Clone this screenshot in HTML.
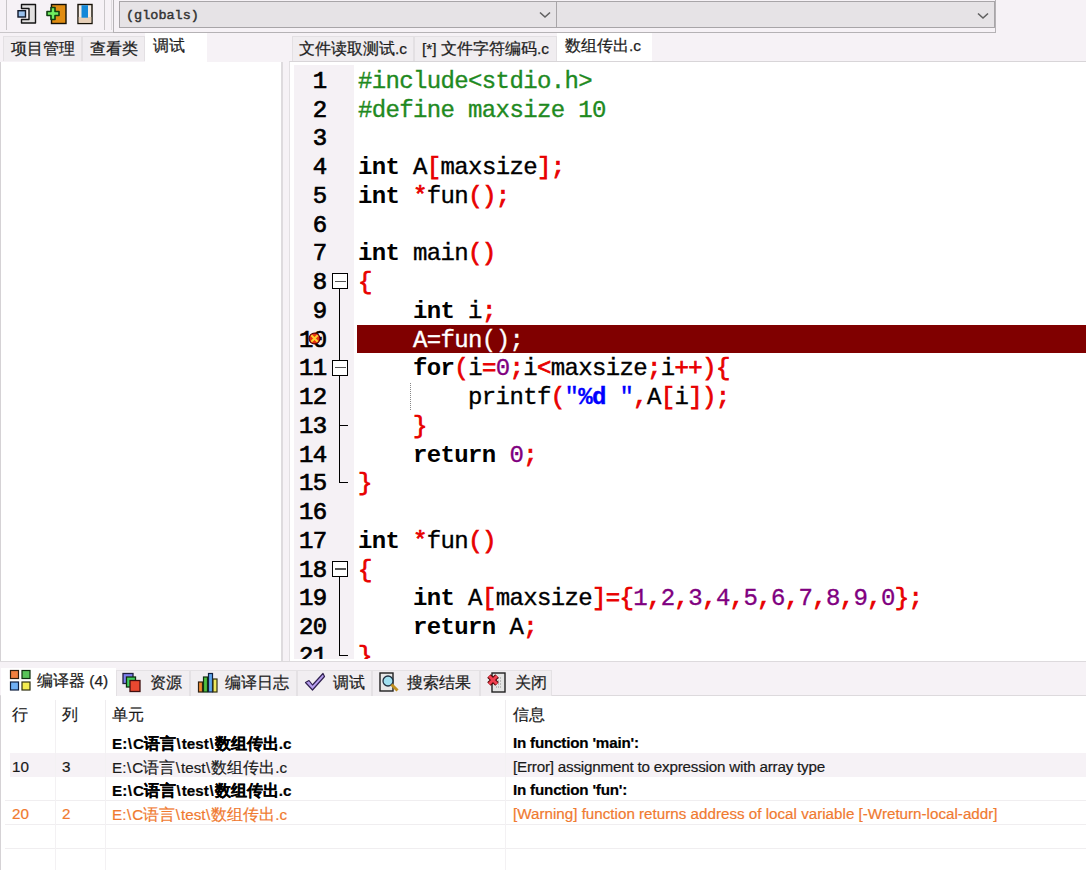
<!DOCTYPE html>
<html><head><meta charset="utf-8"><style>
*{box-sizing:border-box;margin:0;padding:0}
html,body{width:1086px;height:870px;overflow:hidden;background:#f6f2f6;font-family:"Liberation Sans",sans-serif;color:#1a1a1a}
.a{position:absolute}
.code{position:absolute;font-family:"Liberation Mono",monospace;font-size:24px;letter-spacing:-0.64px;white-space:pre;color:#000;-webkit-text-stroke:0.35px currentColor}
.k{font-weight:bold;color:#000;-webkit-text-stroke:0}
.r{color:#e80000;font-weight:normal;-webkit-text-stroke:0.75px currentColor}
.g{color:#1f8a1f}
.p{color:#800080}
.b{color:#0000ff}
.ln{position:absolute;font-family:"Liberation Mono",monospace;font-size:24px;letter-spacing:-0.64px;font-weight:normal;-webkit-text-stroke:0.7px #000;color:#000;text-align:right;width:42px;white-space:pre}
.tab{position:absolute;font-size:15.5px;white-space:nowrap;color:#1e1e1e;-webkit-text-stroke:0.25px #1e1e1e}
.cell{position:absolute;font-size:15.2px;line-height:20px;white-space:nowrap;color:#1a1a1a;-webkit-text-stroke:0.2px currentColor}
</style></head><body>
<div class="a" style="left:0;top:0;width:996px;height:33px;background:#f6f2f6;border-bottom:1px solid #c9c6c9"></div>
<div class="a" style="left:6px;top:0;width:1px;height:30px;background:#c8c5c8"></div>
<svg class="a" style="left:0;top:0" width="100" height="30" viewBox="0 0 100 30"><path d="M21.5 4.5 H35.5 V23 H21.5 V19.5 H29 V8.5 H21.5 Z" fill="#e2e0e0" stroke="#151515" stroke-width="1.4" stroke-linejoin="round"/><rect x="18" y="10.7" width="7.5" height="6.3" fill="#98c0ec" stroke="#101828" stroke-width="1.4"/><rect x="51.5" y="4.5" width="14.5" height="19" fill="#e08c12" stroke="#151005" stroke-width="1.4"/><path d="M51 7.5 h4 v4 h4 v4 h-4 v4 h-4 v-4 h-4 v-4 h4 Z" fill="#70ee60" stroke="#104010" stroke-width="1.6" stroke-linejoin="round"/><rect x="78" y="4.5" width="14" height="19" fill="#f4ece4" stroke="#151005" stroke-width="1.4"/><rect x="78.7" y="17" width="12.6" height="5.8" fill="#e8d0b8"/><rect x="81.5" y="5.2" width="6.5" height="12.5" fill="#1488d8"/></svg>
<div class="a" style="left:104px;top:0;width:1px;height:30px;background:#c8c5c8"></div>
<div class="a" style="left:111px;top:0;width:1px;height:30px;background:#dedbde"></div>
<div class="a" style="left:113px;top:-2px;width:883px;height:35px;border:1px solid #b5b2b5;background:#f6f2f6"></div>
<div class="a" style="left:119px;top:1px;width:438px;height:27px;border:1px solid #a8a5a8;background:#e6e3e6"></div>
<div class="a" style="left:556px;top:1px;width:439px;height:27px;border:1px solid #a8a5a8;background:#e6e3e6"></div>
<div class="a" style="left:126px;top:8px;font-family:'Liberation Mono',monospace;font-size:13.5px;font-weight:normal;-webkit-text-stroke:0.45px #333;color:#333;white-space:pre">(globals)</div>
<svg class="a" style="left:539px;top:10.8px" width="12" height="8"><path d="M1 1.5 L6 6 L11 1.5" fill="none" stroke="#606060" stroke-width="1.6"/></svg>
<svg class="a" style="left:976.5px;top:11.5px" width="12" height="8"><path d="M1 1.5 L6 6 L11 1.5" fill="none" stroke="#606060" stroke-width="1.6"/></svg>
<div class="tab" style="left:3px;top:36px;width:79px;height:25px;background:#f0edf0;border:1px solid #e3e0e3;border-bottom:none;padding:2px 0 0 7px">项目管理</div>
<div class="tab" style="left:82px;top:36px;width:63px;height:25px;background:#f0edf0;border:1px solid #e3e0e3;border-bottom:none;padding:2px 0 0 7px">查看类</div>
<div class="tab" style="left:145px;top:33px;width:62px;height:29px;background:#fff;padding:3px 0 0 8px">调试</div>
<div class="a" style="left:0;top:61.5px;width:281px;height:600.5px;background:#fff;border-left:1px solid #d5d2d5"></div>
<div class="a" style="left:281px;top:61.5px;width:1.5px;height:600.5px;background:#dedbde"></div>
<div class="tab" style="left:292px;top:36px;width:122px;height:25px;background:#f0edf0;border:1px solid #e3e0e3;border-bottom:none;padding:2px 0 0 6px">文件读取测试.c</div>
<div class="tab" style="left:414px;top:36px;width:143px;height:25px;background:#f0edf0;border:1px solid #e3e0e3;border-bottom:none;padding:2px 0 0 7px">[*] 文件字符编码.c</div>
<div class="tab" style="left:557px;top:33px;width:95px;height:29px;background:#fff;padding:3px 0 0 8px">数组传出.c</div>
<div class="a" style="left:289px;top:60.5px;width:797px;height:601.5px;background:#fff;border-left:1px solid #e2dfe2;border-top:1px solid #d8d5d8;border-bottom:1px solid #d5d2d5;overflow:hidden">
<div class="a" style="left:3.8000000000000114px;top:3px;width:60.6px;height:600px;background:#f5f1f5"></div>
<div class="a" style="left:66.60000000000002px;top:263.00px;width:800px;height:28.75px;background:#800000"></div>
<div class="code" style="left:68px;top:6.25px;height:28.75px;line-height:28.75px"><span class="g">#include&lt;stdio.h&gt;</span></div>
<div class="ln" style="left:-5.5px;top:6.45px;height:28.75px;line-height:28.75px">1</div>
<div class="code" style="left:68px;top:35.00px;height:28.75px;line-height:28.75px"><span class="g">#define maxsize 10</span></div>
<div class="ln" style="left:-5.5px;top:35.20px;height:28.75px;line-height:28.75px">2</div>
<div class="code" style="left:68px;top:63.75px;height:28.75px;line-height:28.75px"></div>
<div class="ln" style="left:-5.5px;top:63.95px;height:28.75px;line-height:28.75px">3</div>
<div class="code" style="left:68px;top:92.50px;height:28.75px;line-height:28.75px"><span class="k">int</span> A<span class="r">[</span>maxsize<span class="r">];</span></div>
<div class="ln" style="left:-5.5px;top:92.70px;height:28.75px;line-height:28.75px">4</div>
<div class="code" style="left:68px;top:121.25px;height:28.75px;line-height:28.75px"><span class="k">int</span> <span class="r">*</span>fun<span class="r">();</span></div>
<div class="ln" style="left:-5.5px;top:121.45px;height:28.75px;line-height:28.75px">5</div>
<div class="code" style="left:68px;top:150.00px;height:28.75px;line-height:28.75px"></div>
<div class="ln" style="left:-5.5px;top:150.20px;height:28.75px;line-height:28.75px">6</div>
<div class="code" style="left:68px;top:178.75px;height:28.75px;line-height:28.75px"><span class="k">int</span> main<span class="r">()</span></div>
<div class="ln" style="left:-5.5px;top:178.95px;height:28.75px;line-height:28.75px">7</div>
<div class="code" style="left:68px;top:207.50px;height:28.75px;line-height:28.75px"><span class="r">{</span></div>
<div class="ln" style="left:-5.5px;top:207.70px;height:28.75px;line-height:28.75px">8</div>
<div class="code" style="left:68px;top:236.25px;height:28.75px;line-height:28.75px">    <span class="k">int</span> i<span class="r">;</span></div>
<div class="ln" style="left:-5.5px;top:236.45px;height:28.75px;line-height:28.75px">9</div>
<div class="code" style="left:68px;top:265.00px;height:28.75px;line-height:28.75px">    <span style="color:#fff">A=fun();</span></div>
<div class="ln" style="left:-5.5px;top:265.20px;height:28.75px;line-height:28.75px">10</div>
<div class="code" style="left:68px;top:293.75px;height:28.75px;line-height:28.75px">    <span class="k">for</span><span class="r">(</span>i<span class="r">=</span><span class="p">0</span><span class="r">;</span>i<span class="r">&lt;</span>maxsize<span class="r">;</span>i<span class="r">++){</span></div>
<div class="ln" style="left:-5.5px;top:293.95px;height:28.75px;line-height:28.75px">11</div>
<div class="code" style="left:68px;top:322.50px;height:28.75px;line-height:28.75px">        printf<span class="r">(</span><span class="b">"<b>%d</b> "</span><span class="r">,</span>A<span class="r">[</span>i<span class="r">]);</span></div>
<div class="ln" style="left:-5.5px;top:322.70px;height:28.75px;line-height:28.75px">12</div>
<div class="code" style="left:68px;top:351.25px;height:28.75px;line-height:28.75px">    <span class="r">}</span></div>
<div class="ln" style="left:-5.5px;top:351.45px;height:28.75px;line-height:28.75px">13</div>
<div class="code" style="left:68px;top:380.00px;height:28.75px;line-height:28.75px">    <span class="k">return</span> <span class="p">0</span><span class="r">;</span></div>
<div class="ln" style="left:-5.5px;top:380.20px;height:28.75px;line-height:28.75px">14</div>
<div class="code" style="left:68px;top:408.75px;height:28.75px;line-height:28.75px"><span class="r">}</span></div>
<div class="ln" style="left:-5.5px;top:408.95px;height:28.75px;line-height:28.75px">15</div>
<div class="code" style="left:68px;top:437.50px;height:28.75px;line-height:28.75px"></div>
<div class="ln" style="left:-5.5px;top:437.70px;height:28.75px;line-height:28.75px">16</div>
<div class="code" style="left:68px;top:466.25px;height:28.75px;line-height:28.75px"><span class="k">int</span> <span class="r">*</span>fun<span class="r">()</span></div>
<div class="ln" style="left:-5.5px;top:466.45px;height:28.75px;line-height:28.75px">17</div>
<div class="code" style="left:68px;top:495.00px;height:28.75px;line-height:28.75px"><span class="r">{</span></div>
<div class="ln" style="left:-5.5px;top:495.20px;height:28.75px;line-height:28.75px">18</div>
<div class="code" style="left:68px;top:523.75px;height:28.75px;line-height:28.75px">    <span class="k">int</span> A<span class="r">[</span>maxsize<span class="r">]={</span><span class="p">1</span><span class="r">,</span><span class="p">2</span><span class="r">,</span><span class="p">3</span><span class="r">,</span><span class="p">4</span><span class="r">,</span><span class="p">5</span><span class="r">,</span><span class="p">6</span><span class="r">,</span><span class="p">7</span><span class="r">,</span><span class="p">8</span><span class="r">,</span><span class="p">9</span><span class="r">,</span><span class="p">0</span><span class="r">};</span></div>
<div class="ln" style="left:-5.5px;top:523.95px;height:28.75px;line-height:28.75px">19</div>
<div class="code" style="left:68px;top:552.50px;height:28.75px;line-height:28.75px">    <span class="k">return</span> A<span class="r">;</span></div>
<div class="ln" style="left:-5.5px;top:552.70px;height:28.75px;line-height:28.75px">20</div>
<div class="code" style="left:68px;top:581.25px;height:28.75px;line-height:28.75px"><span class="r">}</span></div>
<div class="ln" style="left:-5.5px;top:581.45px;height:28.75px;line-height:28.75px">21</div>
<div class="a" style="left:41.60000000000002px;top:211.88px;width:16.6px;height:16px;border:1.3px solid #000;background:#fff"></div>
<div class="a" style="left:44.5px;top:219.18px;width:11px;height:1.4px;background:#555"></div>
<div class="a" style="left:49.19999999999999px;top:227.88px;width:1.3px;height:193.85px;background:#000"></div>
<div class="a" style="left:41.60000000000002px;top:298.12px;width:16.6px;height:16px;border:1.3px solid #000;background:#fff"></div>
<div class="a" style="left:44.5px;top:305.43px;width:11px;height:1.4px;background:#555"></div>
<div class="a" style="left:49.19999999999999px;top:363.02px;width:8.5px;height:1.3px;background:#000"></div>
<div class="a" style="left:49.19999999999999px;top:420.52px;width:8.5px;height:1.3px;background:#000"></div>
<div class="a" style="left:41.60000000000002px;top:499.38px;width:16.6px;height:16px;border:1.3px solid #000;background:#fff"></div>
<div class="a" style="left:44.5px;top:506.67px;width:11px;height:1.4px;background:#555"></div>
<div class="a" style="left:49.19999999999999px;top:515.38px;width:1.3px;height:78.85px;background:#000"></div>
<div class="a" style="left:49.19999999999999px;top:593.02px;width:8.5px;height:1.3px;background:#000"></div>
<div class="a" style="left:0;top:597px;width:800px;height:10px;background:#fff"></div>
<svg class="a" style="left:17.600000000000023px;top:270.2px" width="13" height="13" viewBox="0 0 13 13"><defs><radialGradient id="eg" cx="45%" cy="40%" r="60%"><stop offset="0" stop-color="#ffb030"/><stop offset="1" stop-color="#e01000"/></radialGradient></defs><circle cx="6.5" cy="6.5" r="5.4" fill="#e83010" stroke="#5a0000" stroke-width="1.1"/><path d="M3.3 3.3 L9.7 9.7 M9.7 3.3 L3.3 9.7" stroke="#ffd030" stroke-width="2"/></svg>
<div class="a" style="left:120.30000000000001px;top:321.50px;width:1px;height:27.75px;background:repeating-linear-gradient(to bottom,#888 0,#888 1px,transparent 1px,transparent 2px)"></div>
</div>
<div class="a" style="left:0;top:661px;width:1086px;height:35px;background:#f6f2f6;border-top:1px solid #dddadd;border-bottom:1px solid #dddadd"></div>
<div class="a" style="left:116px;top:670px;width:74px;height:26px;background:#f1eef1;border:1px solid #e4e1e4;border-bottom:none"></div>
<div class="tab" style="left:150px;top:673.3px;font-size:15.5px">资源</div>
<svg class="a" style="left:122px;top:672px" width="20" height="22" viewBox="0 0 20 22"><rect x="1" y="1.5" width="10" height="10" fill="#7f7ff0" stroke="#202040" stroke-width="1.3"/><rect x="4.5" y="5" width="9" height="10" fill="#40d060" stroke="#103010" stroke-width="1.3"/><rect x="8" y="8.5" width="10" height="11" fill="#e84830" stroke="#401010" stroke-width="1.3"/></svg>
<div class="a" style="left:190px;top:670px;width:107px;height:26px;background:#f1eef1;border:1px solid #e4e1e4;border-bottom:none"></div>
<div class="tab" style="left:225px;top:673.3px;font-size:15.5px">编译日志</div>
<svg class="a" style="left:197px;top:672px" width="22" height="22" viewBox="0 0 22 22"><rect x="1.5" y="10" width="4" height="10" fill="#f08a30" stroke="#302010" stroke-width="1.2"/><rect x="6.5" y="5" width="4" height="15" fill="#50c040" stroke="#103010" stroke-width="1.2"/><rect x="11.5" y="1.5" width="4" height="18.5" fill="#60a8f0" stroke="#102040" stroke-width="1.2"/><rect x="16" y="7" width="4" height="13" fill="#f0e860" stroke="#303010" stroke-width="1.2"/></svg>
<div class="a" style="left:297px;top:670px;width:75px;height:26px;background:#f1eef1;border:1px solid #e4e1e4;border-bottom:none"></div>
<div class="tab" style="left:333px;top:673.3px;font-size:15.5px">调试</div>
<svg class="a" style="left:304px;top:672px" width="22" height="20" viewBox="0 0 22 20"><path d="M1.5 10.5 L5 8.5 L8.5 13 L19 1.5 L20.5 4.5 L8.5 18 Z" fill="#b8a0f0" stroke="#302050" stroke-width="1.2" stroke-linejoin="round"/></svg>
<div class="a" style="left:372px;top:670px;width:108px;height:26px;background:#f1eef1;border:1px solid #e4e1e4;border-bottom:none"></div>
<div class="tab" style="left:407px;top:673.3px;font-size:15.5px">搜索结果</div>
<svg class="a" style="left:379px;top:672px" width="22" height="22" viewBox="0 0 22 22"><rect x="1" y="1" width="13" height="18" fill="#e8e8e8" stroke="#202020" stroke-width="1.4"/><circle cx="9" cy="9" r="5" fill="#a0e0f0" stroke="#203040" stroke-width="1.3"/><path d="M12.5 12.5 L18.5 18.5" stroke="#c09020" stroke-width="3"/></svg>
<div class="a" style="left:480px;top:670px;width:72px;height:26px;background:#f1eef1;border:1px solid #e4e1e4;border-bottom:none"></div>
<div class="tab" style="left:515px;top:673.3px;font-size:15.5px">关闭</div>
<svg class="a" style="left:486px;top:672px" width="22" height="22" viewBox="0 0 22 22"><rect x="6" y="1" width="13" height="19" fill="#e4e4e4" stroke="#202020" stroke-width="1.4"/><path d="M10 6h6M10 9h6M10 12h6M10 15h6" stroke="#909090" stroke-width="1" stroke-dasharray="1 1"/><path d="M3 4 L11 12 M11 4 L3 12" stroke="#500000" stroke-width="5"/><path d="M3 4 L11 12 M11 4 L3 12" stroke="#f04050" stroke-width="3"/></svg>
<div class="a" style="left:1px;top:668px;width:115px;height:29px;background:#fff"></div>
<div class="tab" style="left:37px;top:671px;font-size:15.5px">编译器 (4)</div>
<svg class="a" style="left:9px;top:669px" width="22" height="22" viewBox="0 0 22 22"><rect x="1.5" y="1.5" width="8" height="8" fill="#f08040" stroke="#302010" stroke-width="1.2"/><rect x="13" y="1.5" width="8" height="8" fill="#58c458" stroke="#103010" stroke-width="1.2"/><rect x="1.5" y="13" width="8" height="8" fill="#70b0f4" stroke="#102040" stroke-width="1.2"/><rect x="13" y="13" width="8" height="8" fill="#f4ec50" stroke="#303010" stroke-width="1.2"/></svg>
<div class="a" style="left:0;top:696px;width:1086px;height:174px;background:#fff;border-left:1px solid #d5d2d5"></div>
<div class="a" style="left:55px;top:700px;width:1px;height:30px;background:#efedef"></div>
<div class="a" style="left:104.5px;top:700px;width:1px;height:30px;background:#efedef"></div>
<div class="a" style="left:504.5px;top:700px;width:1px;height:30px;background:#efedef"></div>
<div class="a" style="left:10px;top:753px;width:1076px;height:24px;background:#f6f2f6"></div>
<div class="a" style="left:5px;top:800px;width:1081px;height:1px;background:#f0eef0"></div>
<div class="a" style="left:5px;top:824px;width:1081px;height:1px;background:#f0eef0"></div>
<div class="a" style="left:5px;top:848px;width:1081px;height:1px;background:#f0eef0"></div>
<div class="a" style="left:55px;top:730px;width:1px;height:140px;background:#f3f1f3"></div>
<div class="a" style="left:105px;top:730px;width:1px;height:140px;background:#f3f1f3"></div>
<div class="a" style="left:505px;top:730px;width:1px;height:140px;background:#f3f1f3"></div>
<div class="cell" style="left:12px;top:705px;font-size:15.5px">行</div>
<div class="cell" style="left:62px;top:705px;font-size:15.5px">列</div>
<div class="cell" style="left:112px;top:705px;font-size:15.5px">单元</div>
<div class="cell" style="left:513px;top:705px;font-size:15.5px">信息</div>
<div class="cell" style="left:112px;top:733px;color:#000;font-weight:bold;">E:<span style="margin:0 1px 0 0.6px">\</span>C<span style="font-size:16.26px">语言</span><span style="margin:0 1px 0 0.6px">\</span>test<span style="margin:0 1px 0 0.6px">\</span><span style="font-size:16.26px">数组传出</span>.c</div>
<div class="cell" style="left:513px;top:733px;color:#000;font-weight:bold;letter-spacing:-0.2px">In function 'main':</div>
<div class="cell" style="left:12px;top:757px;color:#1a1a1a">10</div>
<div class="cell" style="left:62px;top:757px;color:#1a1a1a">3</div>
<div class="cell" style="left:112px;top:757px;color:#1a1a1a;">E:<span style="margin:0 1px 0 0.6px">\</span>C<span style="font-size:16.26px">语言</span><span style="margin:0 1px 0 0.6px">\</span>test<span style="margin:0 1px 0 0.6px">\</span><span style="font-size:16.26px">数组传出</span>.c</div>
<div class="cell" style="left:513px;top:757px;color:#1a1a1a;letter-spacing:-0.2px">[Error] assignment to expression with array type</div>
<div class="cell" style="left:112px;top:780px;color:#000;font-weight:bold;">E:<span style="margin:0 1px 0 0.6px">\</span>C<span style="font-size:16.26px">语言</span><span style="margin:0 1px 0 0.6px">\</span>test<span style="margin:0 1px 0 0.6px">\</span><span style="font-size:16.26px">数组传出</span>.c</div>
<div class="cell" style="left:513px;top:780px;color:#000;font-weight:bold;letter-spacing:-0.2px">In function 'fun':</div>
<div class="cell" style="left:12px;top:804px;color:#f07a30">20</div>
<div class="cell" style="left:62px;top:804px;color:#f07a30">2</div>
<div class="cell" style="left:112px;top:804px;color:#f07a30;">E:<span style="margin:0 1px 0 0.6px">\</span>C<span style="font-size:16.26px">语言</span><span style="margin:0 1px 0 0.6px">\</span>test<span style="margin:0 1px 0 0.6px">\</span><span style="font-size:16.26px">数组传出</span>.c</div>
<div class="cell" style="left:513px;top:804px;color:#f07a30;letter-spacing:0px">[Warning] function returns address of local variable [-Wreturn-local-addr]</div>
</body></html>
